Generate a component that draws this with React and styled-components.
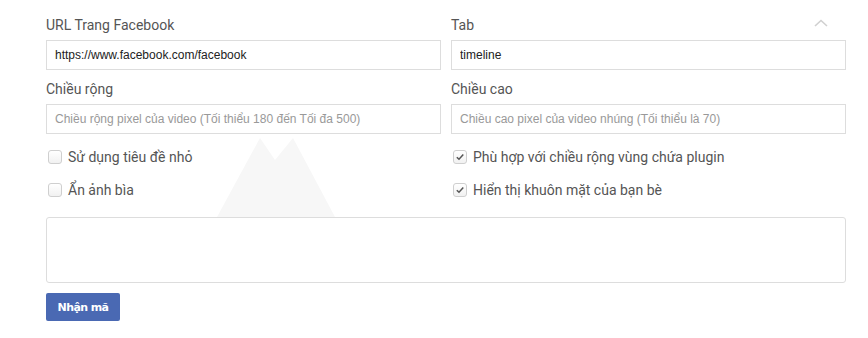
import React from "react";
import styled, { createGlobalStyle } from "styled-components";

const GlobalStyle = createGlobalStyle`
  body {
    margin: 0;
    background: #fff;
    font-family: Roboto, "Noto Sans", sans-serif;
  }
`;

const Page = styled.div`
  position: relative;
  width: 868px;
  height: 338px;
  box-sizing: border-box;
  padding: 14px 22px 0 46px;
  overflow: hidden;
`;

const Watermark = styled.svg`
  position: absolute;
  left: 217px;
  top: 136px;
  pointer-events: none;
`;

const Form = styled.div`
  position: relative;
  width: 800px;
`;

const Grid = styled.div`
  display: grid;
  grid-template-columns: 395px 395px;
  column-gap: 10px;
`;

const Field = styled.div`
  display: flex;
  flex-direction: column;
  margin-bottom: ${(p) => p.$gap || 0}px;
`;

const LabelRow = styled.div`
  display: flex;
  justify-content: space-between;
  align-items: center;
  height: 22px;
  margin-bottom: 4px;
`;

const Label = styled.label`
  font-size: 14px;
  color: #555;
  line-height: 22px;
`;

const Chevron = styled.svg`
  margin-right: 18px;
  margin-top: -4px;
`;

const Input = styled.input`
  box-sizing: border-box;
  width: 100%;
  height: 30px;
  border: 1px solid #ddd;
  border-radius: 0;
  padding: 0 8px;
  font-family: "Liberation Sans", Arial, sans-serif;
  font-size: 12px;
  color: #222;
  outline: none;
  &::placeholder {
    color: #999;
  }
`;

const Checks = styled.div`
  display: grid;
  grid-template-columns: 395px 395px;
  column-gap: 10px;
  row-gap: 11px;
  margin-top: 12px;
`;

const CheckRow = styled.label`
  display: flex;
  align-items: center;
  gap: 6px;
  height: 22px;
  padding-left: 2px;
  font-size: 14px;
  color: #555;
`;

const Box = styled.span`
  box-sizing: border-box;
  width: 14px;
  height: 14px;
  border: 1px solid #cfcfcf;
  border-radius: 3px;
  background: linear-gradient(#fff, #f1f1f1);
  display: flex;
  align-items: center;
  justify-content: center;
`;

const Code = styled.textarea`
  box-sizing: border-box;
  display: block;
  width: 800px;
  height: 66px;
  margin-top: 16px;
  border: 1px solid #ddd;
  border-radius: 3px;
  resize: none;
  outline: none;
`;

const Button = styled.button`
  margin-top: 10px;
  width: 74px;
  height: 28px;
  border: none;
  border-radius: 2px;
  background: #4a69b3;
  color: #fff;
  font-family: "DejaVu Sans", sans-serif;
  font-weight: bold;
  font-size: 11px;
  letter-spacing: -0.6px;
  padding: 0;
`;

const Check = ({ checked, children }) => (
  <CheckRow>
    <Box>
      {checked && (
        <svg width="10" height="10" viewBox="0 0 10 10">
          <path d="M1.8 5.2 L4 7.3 L8.3 2.6" fill="none" stroke="#555" strokeWidth="1.5" />
        </svg>
      )}
    </Box>
    {children}
  </CheckRow>
);

export default function App() {
  return (
    <>
      <GlobalStyle />
      <Page>
        <Watermark width="120" height="82" viewBox="0 0 120 82">
          <path d="M0 81 L43 2 L58 24 L76 2 L118 81 Z" fill="#f7f7f7" />
        </Watermark>
        <Form>
          <Grid>
            <Field $gap={8}>
              <LabelRow>
                <Label>URL Trang Facebook</Label>
              </LabelRow>
              <Input defaultValue="https://www.facebook.com/facebook" />
            </Field>
            <Field $gap={8}>
              <LabelRow>
                <Label>Tab</Label>
                <Chevron width="14" height="8" viewBox="0 0 14 8">
                  <path d="M1 7 L7 1.5 L13 7" fill="none" stroke="#d0d0d0" strokeWidth="1.6" />
                </Chevron>
              </LabelRow>
              <Input defaultValue="timeline" />
            </Field>
            <Field>
              <LabelRow>
                <Label>Chiều rộng</Label>
              </LabelRow>
              <Input placeholder="Chiều rộng pixel của video (Tối thiểu 180 đến Tối đa 500)" />
            </Field>
            <Field>
              <LabelRow>
                <Label>Chiều cao</Label>
              </LabelRow>
              <Input placeholder="Chiều cao pixel của video nhúng (Tối thiểu là 70)" />
            </Field>
          </Grid>
          <Checks>
            <Check>Sử dụng tiêu đề nhỏ</Check>
            <Check checked>Phù hợp với chiều rộng vùng chứa plugin</Check>
            <Check>Ẩn ảnh bìa</Check>
            <Check checked>Hiển thị khuôn mặt của bạn bè</Check>
          </Checks>
          <Code />
          <Button>Nhận mã</Button>
        </Form>
      </Page>
    </>
  );
}
